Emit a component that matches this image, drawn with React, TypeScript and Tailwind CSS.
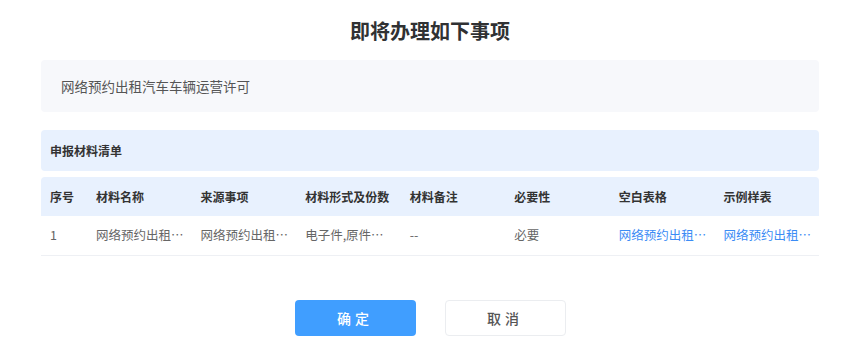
const font = { fontFamily: '"Noto Sans CJK SC", "Noto Sans", sans-serif' };

const headers = ["序号", "材料名称", "来源事项", "材料形式及份数", "材料备注", "必要性", "空白表格", "示例样表"];

const row = [
  { text: "1", link: false },
  { text: "网络预约出租…", link: false },
  { text: "网络预约出租…", link: false },
  { text: "电子件,原件…", link: false },
  { text: "--", link: false },
  { text: "必要", link: false },
  { text: "网络预约出租…", link: true },
  { text: "网络预约出租…", link: true },
];

export default function App() {
  return (
    <div className="w-[865px] h-[358px] bg-white pl-[41px] pr-[46px] pt-[17px]" style={font}>
      <h1 className="text-center text-[20px] leading-[28px] font-bold text-[#303133]">即将办理如下事项</h1>

      <div className="mt-[15px] h-[52px] rounded bg-[#f7f8fb] px-5 flex items-center text-[13.5px] text-[#555]">
        网络预约出租汽车车辆运营许可
      </div>

      <div className="mt-[18px] h-[41px] rounded bg-[#e8f1fe] px-[9px] flex items-center text-[12px] font-bold text-[#333]">
        申报材料清单
      </div>

      <div className="mt-[6px]">
        <div className="grid grid-cols-[46px_repeat(7,1fr)] h-[39px] bg-[#e8f1fe] rounded-t-sm">
          {headers.map((h) => (
            <div key={h} className="pl-[9px] flex items-center text-[12px] font-bold text-[#333] whitespace-nowrap">
              {h}
            </div>
          ))}
        </div>
        <div className="grid grid-cols-[46px_repeat(7,1fr)] h-10 border-b border-[#eef0f4]">
          {row.map((c, i) => (
            <div
              key={i}
              className={`pl-[9px] flex items-center text-[12.5px] whitespace-nowrap ${c.link ? "text-[#3b8cf5]" : "text-[#666]"}`}
            >
              {c.text}
            </div>
          ))}
        </div>
      </div>

      <div className="mt-11 flex justify-center gap-[29px]">
        <button className="w-[121px] h-9 rounded bg-[#409eff] text-white text-[14px] font-medium tracking-[4px]">
          确定
        </button>
        <button className="w-[121px] h-9 rounded border border-[#ebedf0] bg-white text-[#555] text-[14px] font-medium tracking-[4px]">
          取消
        </button>
      </div>
    </div>
  );
}
